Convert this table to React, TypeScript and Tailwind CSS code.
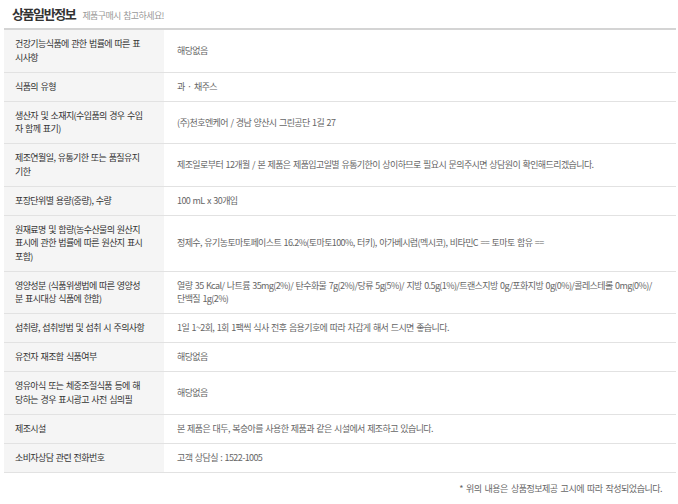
import React from 'react';

// labels keep the line breaks of the original page
const rows: { label: string; value: string }[] = [
  { label: '건강기능식품에 관한 법률에 따른 표\n시사항', value: '해당없음' },
  { label: '식품의 유형', value: '과 · 채주스' },
  { label: '생산자 및 소재지(수입품의 경우 수입\n자 함께 표기)', value: '(주)천호엔케어 / 경남 양산시 그린공단 1길 27' },
  {
    label: '제조연월일, 유통기한 또는 품질유지\n기한',
    value: '제조일로부터 12개월 / 본 제품은 제품입고일별 유통기한이 상이하므로 필요시 문의주시면 상담원이 확인해드리겠습니다.',
  },
  { label: '포장단위별 용량(중량), 수량', value: '100 mL x 30개입' },
  {
    label: '원재료명 및 함량(농수산물의 원산지\n표시에 관한 법률에 따른 원산지 표시\n포함)',
    value: '정제수, 유기농토마토페이스트 16.2%(토마토100%, 터키), 아가베시럽(멕시코), 비타민C == 토마토 함유 ==',
  },
  {
    label: '영양성분 (식품위생법에 따른 영양성\n분 표시대상 식품에 한함)',
    value: '열량 35 Kcal/ 나트륨 35mg(2%)/ 탄수화물 7g(2%)/당류 5g(5%)/ 지방 0.5g(1%)/트랜스지방 0g/포화지방 0g(0%)/콜레스테롤 0mg(0%)/\n단백질 1g(2%)',
  },
  { label: '섭취량, 섭취방법 및 섭취 시 주의사항', value: '1일 1~2회, 1회 1팩씩 식사 전후 음용기호에 따라 차갑게 해서 드시면 좋습니다.' },
  { label: '유전자 재조합 식품여부', value: '해당없음' },
  { label: '영유아식 또는 체중조절식품 등에 해\n당하는 경우 표시광고 사전 심의필', value: '해당없음' },
  { label: '제조시설', value: '본 제품은 대두, 복숭아를 사용한 제품과 같은 시설에서 제조하고 있습니다.' },
  { label: '소비자상담 관련 전화번호', value: '고객 상담실 : 1522-1005' },
];

export default function App() {
  return (
    <div
      className="w-[678px] h-[504px] bg-white overflow-hidden"
      style={{ fontFamily: '"Noto Sans CJK KR", "Noto Sans", sans-serif' }}
    >
      <div className="flex items-baseline gap-[7px] pl-[12px] pt-[4px] h-[28px]">
        <span className="text-[13px] font-bold tracking-[-1.4px] text-[#333]">상품일반정보</span>
        <span className="text-[9px] tracking-[-0.6px] [word-spacing:1px] text-[#999]">제품구매시 참고하세요!</span>
      </div>
      <div className="ml-[4px] w-[672px] border-t-2 border-[#d4d4d4]">
        {rows.map((r, i) => (
          <div key={i} className="grid grid-cols-[160px_1fr] border-b border-[#e2e2e2]">
            <div className="bg-[#f5f5f5] pl-[11px] pr-[4px] py-[7.25px] flex items-center whitespace-pre-line text-[9px] leading-[13.5px] tracking-[-0.6px] [word-spacing:1px] text-[#333]">
              {r.label}
            </div>
            <div className="pl-[13px] pr-[4px] py-[7.25px] flex items-center whitespace-pre-line text-[9px] leading-[13.5px] tracking-[-0.6px] [word-spacing:1px] text-[#666]">
              {r.value}
            </div>
          </div>
        ))}
      </div>
      <div className="text-right pr-[16px] pt-[9px] text-[9px] leading-[13.5px] tracking-[-0.5px] [word-spacing:1.5px] text-[#666]">
        * 위의 내용은 상품정보제공 고시에 따라 작성되었습니다.
      </div>
    </div>
  );
}
